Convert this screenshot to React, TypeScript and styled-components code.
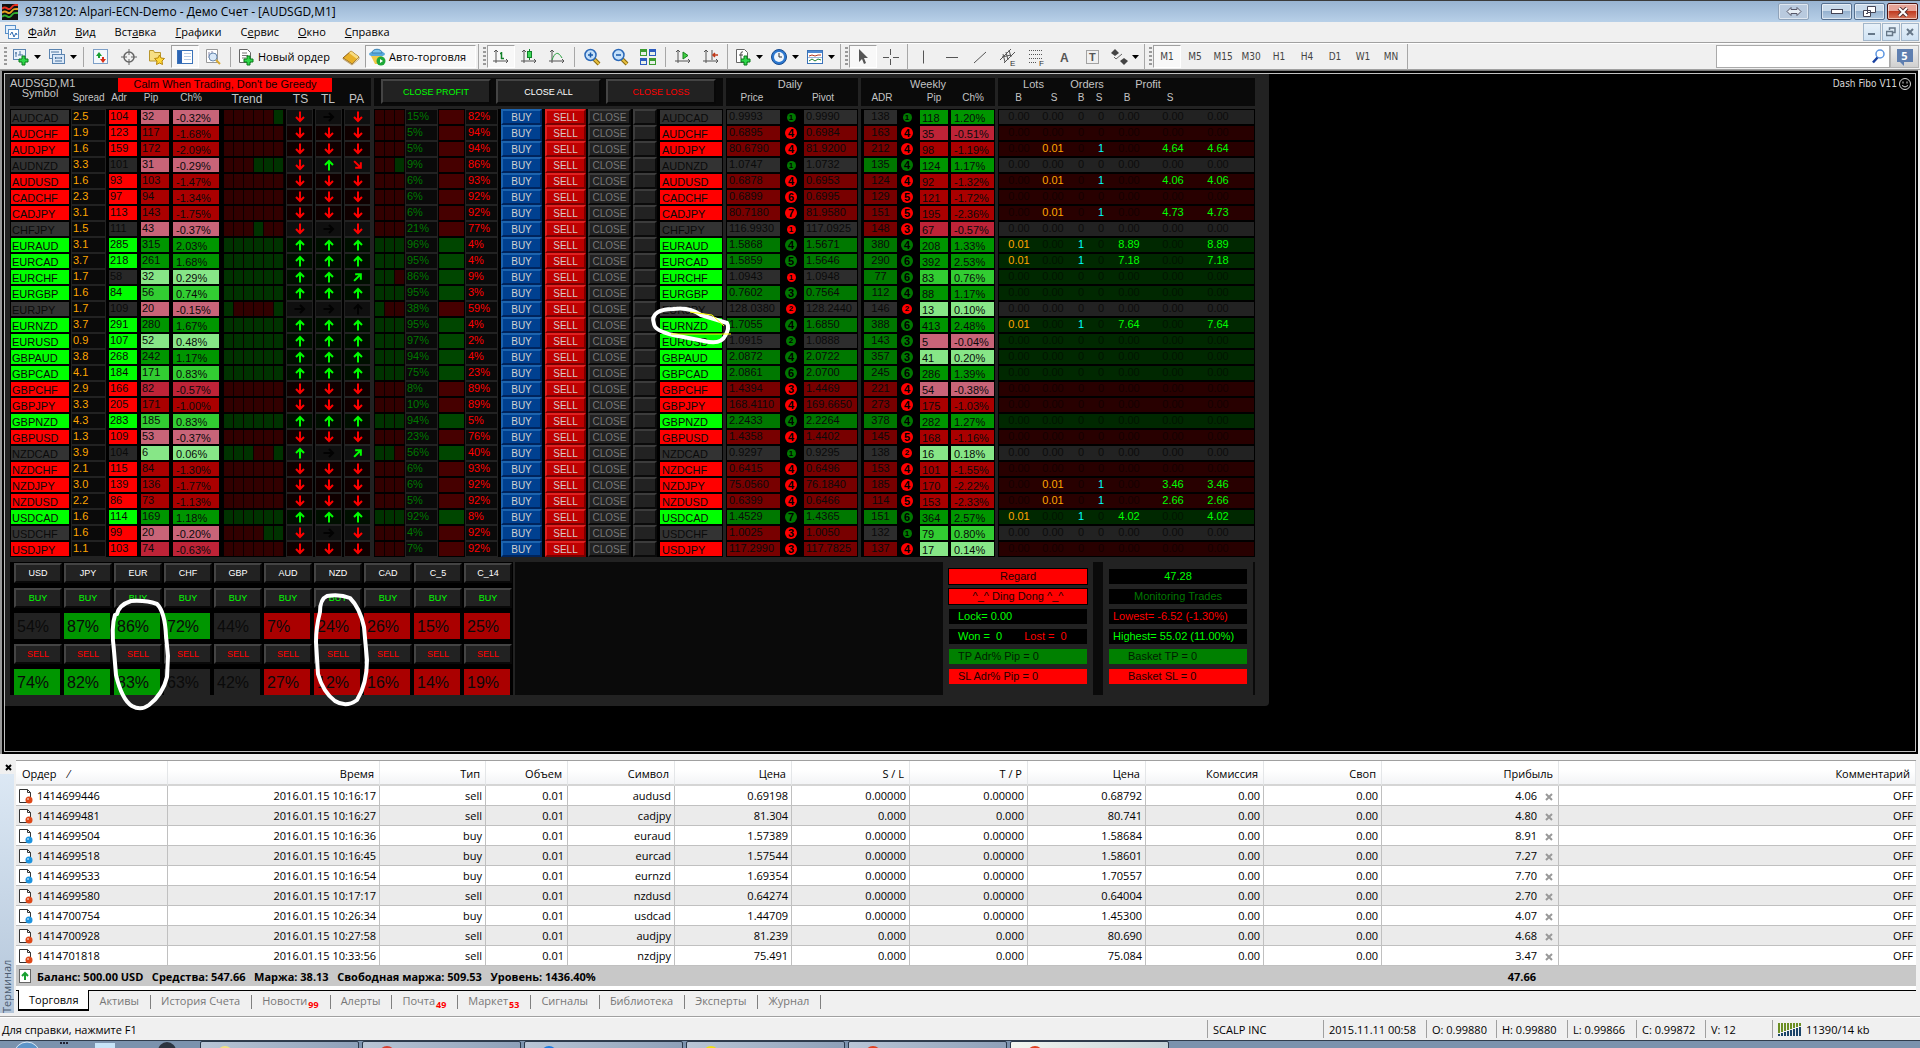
import React from "react";
import styled, { createGlobalStyle } from "styled-components";

const UI = `"Open Sans", "Noto Sans", sans-serif`;
const DASH = `"Liberation Sans", Arial, sans-serif`;

const Global = createGlobalStyle`
  * { box-sizing: border-box; }
  body { margin: 0; background: #f0f0f0; font-family: ${UI}; font-size: 11px; color: #000; }
  button { font: inherit; color: inherit; padding: 0; margin: 0; border: 0; background: none; cursor: pointer; }
  table { border-collapse: collapse; border-spacing: 0; }
  th, td { padding: 0; font-weight: normal; text-align: left; }
  svg { display: block; flex: none; }
`;

const Shell = styled.div`
  display: flex;
  flex-direction: column;
  height: 100vh;
  min-width: 1500px;
  overflow: hidden;
`;

/* ---------- title bar ---------- */
const TitleBar = styled.header`
  display: flex;
  align-items: center;
  height: 22px;
  flex: none;
  padding: 0 2px;
  gap: 7px;
  border-top: 1px solid #3b3b3b;
  background: linear-gradient(#98b4d2, #b8d0e8);
`;
const Title = styled.h1`
  flex: 1;
  margin: 0;
  font-size: 12px;
  font-weight: normal;
`;
const WinButtons = styled.div`
  display: flex;
  gap: 2px;
`;
const WinButton = styled.button<{ $kind?: "close" | "ghost" }>`
  display: flex;
  align-items: center;
  justify-content: center;
  width: 31px;
  height: 17px;
  border: 1px solid ${(p) => (p.$kind === "close" ? "#4a1410" : p.$kind === "ghost" ? "#8fa3ba" : "#55708f")};
  border-radius: 2px;
  margin-right: ${(p) => (p.$kind === "ghost" ? "10px" : "0")};
  box-shadow: inset 0 0 0 1px rgba(255, 255, 255, 0.55);
  background: ${(p) =>
    p.$kind === "close"
      ? "linear-gradient(#e6a498 0 45%, #c03c22 50%, #d9775c)"
      : p.$kind === "ghost"
      ? "#b9cade"
      : "linear-gradient(#c9daea 0 45%, #96b2cf 50%, #b4cbe2)"};
`;

/* ---------- menu bar ---------- */
const MenuBar = styled.nav`
  display: flex;
  align-items: center;
  height: 21px;
  flex: none;
  padding: 0 1px 0 4px;
  border-bottom: 1px solid #a0a0a0;
`;
const MenuList = styled.div`
  display: flex;
  flex: 1;
  gap: 19px;
  margin-left: 8px;
`;
const MenuItem = styled.button`
  font-size: 11px;
  line-height: 18px;
`;
const MdiButton = styled.button`
  display: flex;
  align-items: center;
  justify-content: center;
  width: 18px;
  height: 18px;
  margin-left: 1px;
  border: 1px solid #a3b6c9;
  background: linear-gradient(#e8f1f9, #cfe2f3);
`;

/* ---------- tool bar ---------- */
const ToolBar = styled.div`
  display: flex;
  align-items: center;
  height: 27px;
  flex: none;
  padding-left: 2px;
  border-top: 1px solid #fff;
  border-bottom: 1px solid #a0a0a0;
  background: #f0f0f0;
`;
const Grip = styled.div`
  width: 6px;
  height: 20px;
  background: repeating-linear-gradient(#9a9a9a 0 2px, #f0f0f0 2px 4px) center / 3px 100% no-repeat;
`;
const Sep = styled.div<{ $wide?: boolean }>`
  width: ${(p) => (p.$wide ? 7 : 5)}px;
  height: ${(p) => (p.$wide ? 20 : 26)}px;
  background: linear-gradient(#a7a7a7, #a7a7a7) center / 1px 100% no-repeat;
`;
const Tool = styled.button<{ $pressed?: boolean; $drop?: boolean }>`
  display: flex;
  align-items: center;
  justify-content: ${(p) => (p.$drop ? "flex-start" : "center")};
  gap: 4px;
  width: ${(p) => (p.$drop ? 36 : 28)}px;
  padding-left: ${(p) => (p.$drop ? 3 : 0)}px;
  height: 23px;
  flex: none;
  border: 1px solid transparent;
  ${(p) => p.$pressed && "border-color: #a0a0a0 #fff #fff #a0a0a0; background: #f8f8f8;"}
`;
const WideTool = styled(Tool)<{ $w: number }>`
  width: ${(p) => p.$w}px;
  gap: 3px;
  justify-content: flex-start;
  padding-left: 2px;
  font-size: 11px;
  white-space: nowrap;
`;
const Period = styled(Tool)`
  font-family: "DejaVu Sans Condensed", "DejaVu Sans", sans-serif;
  font-size: 10px;
  color: #444;
`;
const Spacer = styled.div`
  flex: 1;
`;
const SearchBox = styled.label`
  display: flex;
  align-items: center;
  width: 174px;
  height: 23px;
  padding-right: 4px;
  border: 1px solid #aaa;
  background: #fff;
`;
const SearchInput = styled.input`
  flex: 1;
  min-width: 0;
  border: 0;
  outline: 0;
  background: none;
`;
const Bubble = styled.button`
  display: flex;
  align-items: center;
  justify-content: center;
  width: 29px;
  height: 23px;
  border: 1px solid #b4b4b4;
  background: linear-gradient(#f0f0f0, #d0d0d0);
  margin-right: 1px;
`;
const BubbleMark = styled.span`
  position: relative;
  width: 16px;
  height: 13px;
  margin-bottom: 2px;
  background: #5f7fb0;
  color: #fff;
  font-weight: bold;
  font-size: 11px;
  line-height: 13px;
  &::after {
    content: "";
    position: absolute;
    left: 3px;
    top: 13px;
    border: solid transparent;
    border-width: 0 0 4px 4px;
    border-top: 4px solid #5f7fb0;
  }
`;

/* ---------- chart window ---------- */
const ChartFrame = styled.main`
  flex: 1;
  min-height: 0;
  margin-right: 2px;
  padding: 2px;
  border-top: 1px solid #777;
  border-left: 2px solid #999;
  background: #000;
`;
const Chart = styled.div`
  display: flex;
  justify-content: space-between;
  align-items: flex-start;
  height: 100%;
  border: 1px solid #c0c0c0;
  background: #000;
  font-family: ${DASH};
  overflow: hidden;
`;
const ExpertName = styled.div`
  display: flex;
  align-items: center;
  gap: 2px;
  padding: 3px 4px;
  color: #d8d8d8;
  font-size: 10px;
  line-height: 13px;
  font-family: "DejaVu Sans Condensed", "DejaVu Sans", sans-serif;
`;
const Panel = styled.section`
  position: relative;
  padding: 4px 14px 11px 5px;
  border-radius: 0 0 4px 0;
  background: #222;
`;
const Blocks = styled.div`
  display: flex;
  gap: 3px;
`;
const Grid = styled.table`
  display: block;
  font-size: 11px;
  line-height: 14px;
`;
const GridHead = styled.thead`
  display: block;
  height: 28px;
  margin-bottom: 3px;
  background: #0a0a0a;
  color: #c4c4c4;
`;
const HeadRow = styled.tr<{ $cols: string }>`
  display: grid;
  grid-template-columns: ${(p) => p.$cols};
  grid-template-rows: 14px 14px;
`;
const Th = styled.th<{ $span?: number; $big?: boolean; $group?: boolean; $pr?: number }>`
  grid-column: span ${(p) => p.$span || 1};
  padding-right: ${(p) => p.$pr || 0}px;
  text-align: center;
  font-size: ${(p) => (p.$big ? 12 : p.$group ? 11 : 10)}px;
  line-height: ${(p) => (p.$big ? 14 : 12)}px;
`;
const CornerTh = styled.th`
  grid-row: span 2;
  font-size: 11px;
  line-height: 10px;
  text-align: center;
  white-space: nowrap;
`;
const BannerTh = styled.th`
  grid-column: 3 / span 6;
  margin: 0 10px 0 11px;
  background: #f00;
  color: #100;
  font-size: 11px;
  line-height: 13px;
  text-align: center;
  white-space: nowrap;
`;
const LabelTh = styled(Th)<{ $col: number }>`
  grid-column: ${(p) => p.$col};
  grid-row: 2;
`;
const ActionRow = styled.tr`
  display: block;
`;
const HeadActions = styled.th`
  display: flex;
  justify-content: center;
  gap: 5px;
  padding-top: 1px;
`;
const GridBody = styled.tbody`
  display: block;
  background: #000;
`;
const Row = styled.tr`
  display: flex;
  height: 16px;
`;
const Cell = styled.td<{ $w: number; $ml?: number; $bg?: string; $fg?: string; $pl?: number; $frame?: boolean; $c?: boolean }>`
  width: ${(p) => p.$w}px;
  margin-left: ${(p) => p.$ml || 0}px;
  padding-left: ${(p) => p.$pl || 0}px;
  height: 16px;
  flex: none;
  border: 1px solid ${(p) => (p.$frame ? "#222" : "#000")};
  background: ${(p) => p.$bg || "#0a0a0a"};
  color: ${(p) => p.$fg || "#0a0a0a"};
  text-align: ${(p) => (p.$c ? "center" : "left")};
  line-height: 13px;
  white-space: nowrap;
`;
const SymCell = styled(Cell)`
  line-height: 16px;
`;
const BadgeCell = styled.td<{ $w: number }>`
  display: flex;
  align-items: center;
  justify-content: center;
  width: ${(p) => p.$w}px;
  height: 16px;
`;
const Badge = styled.span<{ $d: number; $bg: string }>`
  width: ${(p) => p.$d}px;
  height: ${(p) => p.$d}px;
  border-radius: 50%;
  background: ${(p) => p.$bg};
  color: #000;
  font-size: ${(p) => (p.$d > 10 ? 11 : 8)}px;
  line-height: ${(p) => p.$d}px;
  font-weight: bold;
  text-align: center;
`;
const TrendCell = styled(Cell)`
  display: flex;
`;
const TrendBox = styled.span<{ $up: boolean }>`
  width: 10px;
  height: 14px;
  flex: none;
  border-right: 1px solid #0c0000;
  background: ${(p) => (p.$up ? "#003200" : "#320000")};
`;
const ArrowCell = styled(Cell)`
  display: flex;
  align-items: center;
  justify-content: center;
`;
const ButtonCell = styled.td<{ $w: number; $ml: number }>`
  width: ${(p) => p.$w}px;
  margin-left: ${(p) => p.$ml}px;
  height: 16px;
`;
const tones = {
  buy: ["#004090", "#1c63ae", "#00245c", "#d0d0d0"],
  sell: ["#be0000", "#e02020", "#780000", "#d8c8c8"],
  close: ["#222", "#3c3c3c", "#0a0a0a", "#787878"],
  plain: ["#222", "#444", "#080808", "#fff"],
};
const Bevel = styled.button<{ $tone: keyof typeof tones; $h: number; $w?: number; $fg?: string }>`
  display: block;
  width: ${(p) => (p.$w ? p.$w + "px" : "100%")};
  height: ${(p) => p.$h}px;
  border-style: solid;
  border-width: 2px;
  border-color: ${(p) => `${tones[p.$tone][1]} ${tones[p.$tone][2]} ${tones[p.$tone][2]} ${tones[p.$tone][1]}`};
  background: ${(p) => tones[p.$tone][0]};
  color: ${(p) => p.$fg || tones[p.$tone][3]};
  font-size: ${(p) => (p.$h > 16 ? 9 : 10)}px;
  line-height: ${(p) => p.$h - 3}px;
  text-align: center;
`;
const OrdersRow = styled.tr<{ $bg: string }>`
  display: grid;
  grid-template-columns: 36px 32px 24px 16px 40px 48px 42px;
  width: 257px;
  height: 16px;
  padding: 0 2px;
  border: 1px solid #000;
  background: ${(p) => p.$bg};
`;
const OrderCell = styled.td<{ $fg: string }>`
  color: ${(p) => p.$fg};
  text-align: center;
  line-height: 13px;
`;

/* ---------- lower dashboard ---------- */
const Lower = styled.div`
  display: flex;
  height: 133px;
  margin-top: 5px;
`;
const Currencies = styled.div`
  display: flex;
  gap: 2px;
  width: 503px;
  margin-right: 2px;
  padding: 1px 0 0 4px;
  background: #000;
`;
const Currency = styled.div`
  display: flex;
  flex-direction: column;
  gap: 5px;
  width: 48px;
`;
const Strength = styled.div<{ $bg: string }>`
  width: 46px;
  height: 26px;
  padding-left: 3px;
  background: ${(p) => p.$bg};
  color: #0a0a0a;
  font-size: 16px;
  line-height: 28px;
`;
const Log = styled.div`
  flex: 1;
  background: #0a0a0a;
`;
const Stats = styled.div`
  display: flex;
  flex-direction: column;
  gap: 5px;
  width: 150px;
  padding: 7px 6px 0;
`;
const Stat = styled.div<{ $bg?: string; $fg: string; $pl?: number; $ring?: boolean }>`
  height: 15px;
  padding-left: ${(p) => p.$pl || 0}px;
  background: ${(p) => p.$bg || "#000"};
  box-shadow: ${(p) => (p.$ring ? "0 0 0 1px #000" : "none")};
  color: ${(p) => p.$fg};
  font-size: 11px;
  line-height: 15px;
  text-align: ${(p) => (p.$pl ? "left" : "center")};
  white-space: pre;
`;
const Lost = styled.span`
  margin-left: 22px;
  color: #f00;
`;
const Strip = styled.div<{ $w: number }>`
  width: ${(p) => p.$w}px;
  background: #0a0a0a;
`;
const Marks = styled.svg`
  position: absolute;
  left: 0;
  top: 0;
  pointer-events: none;
  overflow: visible;
`;

/* ---------- terminal ---------- */
const Terminal = styled.section`
  display: flex;
  flex: none;
  margin-top: 6px;
  padding-right: 4px;
  border-bottom: 1px solid #a0a0a0;
`;
const Side = styled.div`
  display: flex;
  flex-direction: column;
  align-items: center;
  width: 16px;
`;
const SideClose = styled.button`
  display: flex;
  align-items: center;
  height: 14px;
`;
const SideTitle = styled.div`
  flex: 1;
  width: 14px;
  margin: 0 2px 3px 0;
  background: linear-gradient(#b4c6da, #dce8f4);
  color: #4c5c70;
  writing-mode: vertical-rl;
  transform: rotate(180deg);
  font-size: 11px;
  line-height: 14px;
`;
const TerminalMain = styled.div`
  flex: 1;
  min-width: 0;
`;
const Orders = styled.table`
  width: 100%;
  table-layout: fixed;
  border-collapse: separate;
  border-top: 1px solid #a0a0a0;
  background: #fff;
`;
const OTh = styled.th<{ $left?: boolean }>`
  height: 25px;
  padding: 1px 5px 0 6px;
  border-right: 1px solid #e4e6e8;
  border-bottom: 2px solid #d5d5d5;
  background: linear-gradient(#fff 40%, #f3f4f6);
  text-align: ${(p) => (p.$left ? "left" : "right")};
`;
const OTr = styled.tr`
  &:nth-child(even) { background: #ebebeb; }
`;
const OTd = styled.td`
  height: 20px;
  padding: 0 3px;
  border-right: 1px solid #c0c0c0;
  border-bottom: 1px solid #c0c0c0;
  line-height: 18px;
  text-align: right;
  white-space: nowrap;
  &:last-child { border-right: 0; }
`;
const OrderId = styled.span`
  display: flex;
  align-items: center;
  gap: 4px;
`;
const CloseMark = styled.button`
  margin: 0 2px 0 8px;
  vertical-align: middle;
`;
const BalanceTd = styled.td<{ $sum?: boolean }>`
  height: 20px;
  padding: 0 ${(p) => (p.$sum ? 23 : 3)}px 0 3px;
  background: #c8c8c8;
  font-weight: bold;
  text-align: ${(p) => (p.$sum ? "right" : "left")};
  white-space: pre;
`;
const Tabs = styled.nav`
  display: flex;
  height: 30px;
  padding: 0 0 4px 2px;
  border-top: 4px solid #fff;
  background: linear-gradient(#000, #000) top / 100% 1px no-repeat;
`;
const Tab = styled.button<{ $active?: boolean }>`
  display: flex;
  align-items: center;
  height: 21px;
  padding: 0 ${(p) => (p.$active ? 10 : 11)}px 0 10px;
  color: ${(p) => (p.$active ? "#000" : "#777")};
  ${(p) => p.$active && "background: #fff; border: solid #000; border-width: 0 1px 2px 1px;"}
`;
const TabLine = styled.i`
  width: 1px;
  height: 14px;
  margin-top: 5px;
  background: #808080;
`;
const Count = styled.sub`
  margin-left: 1px;
  padding-top: 8px;
  color: #f00;
  font-size: 9px;
  line-height: 10px;
  font-weight: bold;
`;

/* ---------- status and task bar ---------- */
const StatusBar = styled.footer`
  display: flex;
  align-items: center;
  height: 23px;
  flex: none;
  padding-left: 2px;
  border-top: 1px solid #fff;
`;
const StatusHint = styled.span`
  flex: 1;
`;
const StatusItem = styled.span<{ $w: number }>`
  display: flex;
  align-items: center;
  gap: 4px;
  width: ${(p) => p.$w}px;
  height: 18px;
  padding-left: 5px;
  border-left: 1px solid #a0a0a0;
`;
const TaskBar = styled.div`
  display: flex;
  gap: 3px;
  height: 8px;
  flex: none;
  border-top: 1px solid #303c4c;
  background: #7b92ad;
  overflow: hidden;
`;
const TaskStart = styled.div`
  width: 197px;
`;
const TaskButton = styled.button<{ $active?: boolean }>`
  width: 159px;
  height: 24px;
  padding-left: 14px;
  border: 1px solid #2b3a4c;
  border-radius: 2px;
  background: ${(p) => (p.$active ? "linear-gradient(90deg, #f2f6f0, #c5d2d8)" : "linear-gradient(90deg, #b9c6d6, #8da0b8)")};
`;

/* ---------- icons ---------- */
const G = "#555";
const axes = <path d="M4 2v13M1 13h15M2 4l2-2 2 2M14 11l2 2-2 2" stroke={G} fill="none" />;
const plus = <path d="M10 8h3v3h3v3h-3v3h-3v-3H7v-3h3z" fill="#2fd84a" stroke="#0b7a1b" />;
const lens = (
  <>
    <path d="M11 11l5 5" stroke="#8a6a10" strokeWidth="4" />
    <path d="M11 11l5 5" stroke="#e8c040" strokeWidth="2" />
    <circle cx="7.5" cy="7" r="5.5" fill="#c4e0fa" stroke="#2a68b8" strokeWidth="1.5" />
  </>
);
const page = <path d="M2.5 1.5h8l3 3v10h-11z" fill="#fff" stroke="#666" />;
const icons: Record<string, React.ReactNode> = {
  newChart: <><rect x="1.5" y="1.5" width="12" height="10" fill="#eaf2fb" stroke="#5b84b0" /><path d="M4 4v5M3 5h2M8 3v4M6 7h5" stroke="#4a74a0" />{plus}</>,
  profiles: <><rect x="1.5" y="1.5" width="12" height="9" fill="#e6effa" stroke="#5b84b0" /><rect x="4.5" y="6.5" width="12" height="9" fill="#dbe8f8" stroke="#5b84b0" /><path d="M3 4h8M7 10h7M7 13h7M8 9l-1 1 1 1M13 9l1 1-1 1" stroke="#4a74a0" fill="none" /></>,
  market: <><rect x="1.5" y="1.5" width="14" height="14" fill="#f4f8fc" stroke="#7ea0c8" /><path d="M4 8l3-4 3 4H8v2H6V8z" fill="#18a030" /><path d="M8 11l3 4 3-4h-2V9h-2v2z" fill="#d83018" /></>,
  data: <><circle cx="9" cy="9" r="5" fill="none" stroke="#666" strokeWidth="1.5" /><path d="M9 1v6M9 11v6M1 9h6M11 9h6" stroke="#666" /></>,
  folder: <><path d="M1.5 13V2.500h4l1 2h6V13z" fill="#f6df84" stroke="#b8962c" /><path d="M11.5 7l1.5 3 3.5.5-2.5 2.5.5 3.500-3-1.500-3 1.500.5-3.500-2.500-2.500 3.500-.5z" fill="#ffd93a" stroke="#b8860b" /></>,
  navigator: <><rect x="1.5" y="2.5" width="15" height="13" fill="#fff" stroke="#3a72b8" /><rect x="2" y="3" width="4" height="12" fill="#2c64b4" /><path d="M8 5.500h7M8 8.500h7M8 11.500h7" stroke="#b8cce4" /></>,
  tester: <><path d="M2.5 1.500h11v13h-11z" fill="#fff" stroke="#999" /><path d="M5 4v6M8 3v6M11 5v4" stroke="#88a" /><circle cx="9" cy="9" r="4" fill="#d8e8f8" stroke="#6a8ab0" /><path d="M12 12l4 4" stroke="#d8a830" strokeWidth="2" /></>,
  order: <>{page}<path d="M5 5h5M5 7.500h6M5 10h4" stroke="#777" />{plus}</>,
  book: <><path d="M1 10L9 3l8 6-7 7z" fill="#e8b028" stroke="#8c5c10" /><path d="M9 3l8 6-2 2-8-6z" fill="#f8dc80" /><path d="M1 10l9 6 7-7v2l-7 6-9-6z" fill="#fff3c8" stroke="#8c5c10" strokeWidth=".5" /></>,
  auto: <><ellipse cx="9" cy="6" rx="8" ry="3" fill="#58a8dc" /><path d="M4 5c0-5 10-5 10 0z" fill="#7cc4ee" stroke="#3a80b0" /><path d="M3 8h11l-4 8H7z" fill="#f0c848" /><circle cx="13" cy="13" r="4.5" fill="#1fa838" /><path d="M12 11v4l3-2z" fill="#fff" /></>,
  bars: <>{axes}<path d="M9.500 4v7M8 5.500h2M9 10.500h3" stroke="#12802a" fill="none" strokeWidth="1.5" /></>,
  candles: <>{axes}<path d="M9.500 1v11" stroke="#12802a" /><rect x="7.5" y="3.5" width="4" height="6" fill="#3cd858" stroke="#12802a" /></>,
  line: <>{axes}<path d="M4 12c3-8 6-9 10-2" stroke="#2aa040" fill="none" /></>,
  zoomIn: <>{lens}<path d="M5 7h5M7.500 4.500v5" stroke="#1858a8" strokeWidth="1.5" /></>,
  zoomOut: <>{lens}<path d="M5 7h5" stroke="#1858a8" strokeWidth="1.5" /></>,
  tile: <><path d="M1 1h7v7H1z" fill="#3c9c30" /><path d="M10 1h7v7h-7z" fill="#2c5cc0" /><path d="M1 10h7v7H1z" fill="#2c5cc0" /><path d="M10 10h7v7h-7z" fill="#3c9c30" /><path d="M2 4h5v3H2zM11 4h5v3h-5zM2 13h5v3H2zM11 13h5v3h-5z" fill="#e8f0e8" /></>,
  scroll: <>{axes}<path d="M9 4v7l5-3.500z" fill="#3cd040" stroke="#188020" /></>,
  shift: <>{axes}<path d="M10 2v10" stroke={G} /><path d="M16 7h-5M13 5l-2 2 2 2" stroke="#c03818" strokeWidth="1.5" fill="none" /></>,
  indicators: <>{page}<path d="M9 4c-3-1-2 3-2 7M5 7h4" stroke="#444" fill="none" />{plus}</>,
  clock: <><circle cx="9" cy="9" r="7.5" fill="#2c78d0" stroke="#184c90" /><circle cx="9" cy="9" r="5" fill="#eef5fc" /><path d="M9 5v4h3" stroke="#333" fill="none" /></>,
  template: <><rect x="1.5" y="2.5" width="15" height="13" fill="#fff" stroke="#3a72b8" /><path d="M2 3h14v2H2z" fill="#4c88d0" /><path d="M3 8l3-1 3 1 3-1 3 0" stroke="#b03820" fill="none" /><path d="M3 13l3-2 3 2 3-2 3 1" stroke="#208030" fill="none" /><path d="M2 9.500h14" stroke="#9ab8dc" /></>,
  cursor: <path d="M5 1v13l3-3 2 5 2-1-2-5h4z" fill="#555" />,
  cross: <path d="M8.500 1v6M8.500 11v6M1 9.500h6M11 9.500h6" stroke={G} />,
  vline: <path d="M8.500 2.500v13" stroke={G} />,
  hline: <path d="M3 9.500h12" stroke={G} />,
  diag: <path d="M3 15L15 4" stroke={G} />,
  channel: <><path d="M1 12L12 1M5 15L16 4M4 6l2 8M7 4l2 8M10 2l2 7M3 9l9-2" stroke={G} fill="none" /><text x="11" y="18" fontSize="8" fill="#333" fontFamily="Liberation Sans">E</text></>,
  fibo: <><path d="M2 2.500h14M2 6.500h14M2 10.500h14M2 14.500h8" stroke={G} strokeDasharray="1 1" /><text x="12" y="18" fontSize="8" fill="#333" fontFamily="Liberation Sans">F</text></>,
  text: <text x="5" y="14" fontSize="12" fontWeight="bold" fill="#555" fontFamily="Liberation Sans">A</text>,
  label: <><rect x="3.5" y="2.5" width="12" height="13" fill="none" stroke={G} strokeDasharray="1 1" /><text x="6" y="13" fontSize="11" fontWeight="bold" fill="#555" fontFamily="Liberation Sans">T</text></>,
  arrows: <><path d="M1 5l4-4 4 4-4 3z" fill="#444" /><path d="M4 9l2 2 6-5" stroke="#666" fill="none" /><path d="M10 13l4 4 4-4-4-3z" fill="#444" /></>,
};
const Icon = ({ name }: { name: string }) => (
  <svg width="18" height="18" viewBox="0 0 18 18" overflow="visible" aria-hidden="true">{icons[name]}</svg>
);
const Caret = () => (
  <svg width="7" height="4" aria-hidden="true"><path d="M0 0h7L3.500 4z" fill="#000" /></svg>
);
const arrowTurn: Record<string, [number, string]> = {
  d: [180, "#f00"], u: [0, "#0f0"], s: [135, "#f00"], n: [45, "#0f0"], "-": [90, "#020202"], "^": [0, "#020202"],
};
const Arrow = ({ kind }: { kind: string }) => (
  <svg width="12" height="12" viewBox="0 0 12 12" aria-hidden="true">
    <path d="M6 11.500V2M2 6l4-4 4 4" fill="none" stroke={arrowTurn[kind][1]} strokeWidth="2" transform={`rotate(${arrowTurn[kind][0]} 6 6)`} />
  </svg>
);
const DocIcon = ({ buy }: { buy: boolean }) => (
  <svg width="14" height="16" viewBox="0 0 14 16" aria-hidden="true">
    <path d="M.5 1.500h8l3 3v10H.5z" fill="#fff" stroke="#333" />
    <path d="M8.500 1.500v3h3" fill="none" stroke="#333" />
    <circle cx="10" cy="12" r="3.5" fill={buy ? "#1c94e0" : "#e04818"} />
    <circle cx="9" cy="11" r="1" fill="#fff" opacity=".6" />
  </svg>
);

/* ---------- data ---------- */
const tone: Record<string, string> = { P: "#c86478", C: "#be2337", R: "#aa0000", L: "#87e687", M: "#32cd32", G: "#009600" };
const symBg: Record<string, string> = { d: "#f00", u: "#0f0", n: "#333" };
const adrBg: Record<string, string> = { d: "#f00", u: "#0f0", n: "#282828" };
const dimBg: Record<string, string> = { d: "#780000", u: "#007800", n: "#2d2d2d" };
const ordBg: Record<string, string> = { d: "#280000", u: "#002800", n: "#222" };
const arrBg: Record<string, string> = { d: "#0f0000", u: "#000f00", n: "#0f0f0f" };

// symbol state spread | adr state | pip change tone | trend arrows mini | buy bar sell | price state badge pivot | adr state badge | pip change tone | order
const pairs = `
AUDCAD n 2.5 104 d 32 -0.32% P rrrrrg d-d rrr 15% r 82% 0.9993 n 1g 0.9990 138 n 1g 118 1.20% G
AUDCHF d 1.9 123 d 117 -1.68% R rrrrrr ddd rrr 5% r 94% 0.6895 d 4r 0.6984 163 d 4r 35 -0.51% C
AUDJPY d 1.6 159 d 172 -2.09% R rrrrrr ddd rrr 5% r 94% 80.6790 d 4r 81.9200 212 d 4r 98 -1.19% R S4.64
AUDNZD n 3.3 101 n 31 -0.29% P rrrggg dus rrg 9% r 86% 1.0747 n 1g 1.0732 135 u 4g 124 1.17% G
AUDUSD d 1.6 93 d 103 -1.47% R rrrrrr ddd rrr 6% r 93% 0.6878 d 4r 0.6953 124 d 4r 92 -1.32% R S4.06
CADCHF d 2.3 97 d 94 -1.34% R rrrrrr ddd rrr 6% r 92% 0.6899 d 6r 0.6995 129 d 5r 121 -1.72% R
CADJPY d 3.1 113 d 143 -1.75% R rrrrrr ddd rrr 6% r 92% 80.7180 d 7r 81.9580 151 d 5r 195 -2.36% R S4.73
CHFJPY n 1.5 111 n 43 -0.37% P rrrgrr d-d rrr 21% r 77% 116.9930 n 1r 117.0925 148 d 3r 67 -0.57% C
EURAUD u 3.1 285 u 315 2.03% G gggggg uuu ggg 96% g 4% 1.5868 u 4g 1.5671 380 u 4g 208 1.33% G B8.89
EURCAD u 3.7 218 u 261 1.68% G gggggg uuu ggg 95% g 4% 1.5859 u 5g 1.5646 290 u 6g 392 2.53% G B7.18
EURCHF u 1.7 58 n 32 0.29% L gggggg uun ggr 86% g 9% 1.0943 n 1r 1.0948 77 u 6g 83 0.76% M
EURGBP u 1.6 84 u 56 0.74% M gggggg uuu ggg 95% g 3% 0.7602 u 3g 0.7564 112 u 4g 88 1.17% G
EURJPY n 1.7 109 n 20 -0.15% P grrrrg --^ grr 38% r 59% 128.0380 n 2r 128.2440 146 n 2r 13 0.10% L
EURNZD u 3.7 291 u 280 1.67% G gggggg uuu ggg 95% g 4% 1.7055 u 4g 1.6850 388 u 6g 413 2.48% G B7.64
EURUSD u 0.9 107 u 52 0.48% L gggggg uuu ggg 97% g 2% 1.0915 n 2g 1.0888 143 u 3g 5 -0.04% P
GBPAUD u 3.8 268 u 242 1.17% G gggggg uuu ggg 94% g 4% 2.0872 u 4g 2.0722 357 u 3g 41 0.20% L
GBPCAD u 4.1 184 u 171 0.83% M gggggg uuu ggg 75% g 23% 2.0861 u 6g 2.0700 245 u 6g 286 1.39% G
GBPCHF d 2.9 166 d 82 -0.57% C rrrrrr ddd rrr 8% r 89% 1.4394 d 3r 1.4469 221 d 4r 54 -0.38% P
GBPJPY d 3.3 205 d 171 -1.00% R rrrrrr ddd rrr 10% r 89% 168.4110 d 4r 169.6650 273 d 4r 175 -1.03% R
GBPNZD u 4.3 283 u 185 0.83% M gggggg uuu ggg 94% g 5% 2.2433 u 4g 2.2264 378 u 4g 282 1.27% G
GBPUSD d 1.3 109 d 53 -0.37% P rrrrrr ddd rrr 23% r 76% 1.4358 d 4r 1.4402 145 d 5r 168 -1.16% R
NZDCAD n 3.9 104 n 6 0.06% L gggrrg u-n ggr 56% g 40% 0.9297 n 1g 0.9295 138 n 2r 16 0.18% L
NZDCHF d 2.1 115 d 84 -1.30% R rrrrrr ddd rrr 6% r 93% 0.6415 d 4r 0.6496 153 d 4r 101 -1.55% R
NZDJPY d 3.0 139 d 136 -1.77% R rrrrrr ddd rrr 6% r 92% 75.0560 d 4r 76.1840 185 d 4r 170 -2.22% R S3.46
NZDUSD d 2.2 86 d 73 -1.13% R rrrrrr ddd rrr 5% r 92% 0.6399 d 4r 0.6466 114 d 5r 153 -2.33% R S2.66
USDCAD u 1.6 114 u 169 1.18% G gggggg uuu ggg 92% g 8% 1.4529 u 7g 1.4365 151 u 6g 364 2.57% G B4.02
USDCHF n 1.6 99 d 20 -0.20% P rrrrgg d-d rrr 4% r 92% 1.0025 d 3r 1.0050 132 n 1g 79 0.80% M
USDJPY d 1.1 103 d 74 -0.63% C rrrrrr ddd rrr 7% r 92% 117.2990 d 3r 117.7825 137 d 4r 17 0.14% L`
  .trim()
  .split("\n")
  .map((l) => {
    const [sym, st, spread, adr, adrS, pip, ch, chT, trend, arrows, mini, buy, bar, sell, price, priceS, b1, pivot, wAdr, wAdrS, b2, wPip, wCh, wT, order] = l.split(" ");
    return { sym, st, spread, adr, adrS, pip, ch, chT, trend, arrows, mini, buy, bar, sell, price, priceS, b1, pivot, wAdr, wAdrS, b2, wPip, wCh, wT, order };
  });

const currencies: [string, string, string, string, string][] = [
  ["USD", "54%", "n", "74%", "u"], ["JPY", "87%", "u", "82%", "u"], ["EUR", "86%", "u", "83%", "u"],
  ["CHF", "72%", "u", "63%", "n"], ["GBP", "44%", "n", "42%", "n"], ["AUD", "7%", "d", "27%", "d"],
  ["NZD", "24%", "d", "12%", "d"], ["CAD", "26%", "d", "16%", "d"], ["C_5", "15%", "d", "14%", "d"],
  ["C_14", "25%", "d", "19%", "d"],
];
const strengthBg: Record<string, string> = { d: "#aa0000", u: "#009600", n: "#222" };

const orders = `
1414699446|10:16:17|sell|audusd|0.69198|0.00000|0.68792|4.06
1414699481|10:16:27|sell|cadjpy|81.304|0.000|80.741|4.80
1414699504|10:16:36|buy|euraud|1.57389|0.00000|1.58684|8.91
1414699518|10:16:45|buy|eurcad|1.57544|0.00000|1.58601|7.27
1414699533|10:16:54|buy|eurnzd|1.69354|0.00000|1.70557|7.70
1414699580|10:17:17|sell|nzdusd|0.64274|0.00000|0.64004|2.70
1414700754|10:26:34|buy|usdcad|1.44709|0.00000|1.45300|4.07
1414700928|10:27:58|sell|audjpy|81.239|0.000|80.690|4.68
1414701818|10:33:56|sell|nzdjpy|75.491|0.000|75.084|3.47`
  .trim()
  .split("\n")
  .map((l) => l.split("|"));
const orderCols = [152, 212, 106, 82, 107, 117, 118, 118, 118, 118, 118, 177];
const orderHeads = ["Время", "Тип", "Объем", "Символ", "Цена", "S / L", "T / P", "Цена", "Комиссия", "Своп", "Прибыль", "Комментарий"];

const menus = [["", "Ф", "айл"], ["", "В", "ид"], ["Вст", "а", "вка"], ["", "Г", "рафики"], ["С", "е", "рвис"], ["", "О", "кно"], ["", "С", "правка"]];
const tabs: [string, string?][] = [["Активы"], ["История Счета"], ["Новости", "99"], ["Алерты"], ["Почта", "49"], ["Маркет", "53"], ["Сигналы"], ["Библиотека"], ["Эксперты"], ["Журнал"]];

const NumBadge = ({ v }: { v: string }) => (
  <Badge $d={v[0] === "1" ? 9 : v[0] === "2" ? 10 : 12} $bg={v[1] === "g" ? "#007800" : "#f00"}>{v[0]}</Badge>
);

const SignalBlock = () => (
  <Grid>
    <GridHead>
      <HeadRow $cols="60px 37px 32px 32px 48px 68px 27px 28px 29px">
        <CornerTh>AUDSGD,M1<br />Symbol</CornerTh>
        <BannerTh>Calm When Trading, Don't be Greedy</BannerTh>
        <LabelTh $col={2}>Spread</LabelTh>
        <LabelTh $col={3} $pr={8}>Adr</LabelTh>
        <LabelTh $col={4} $pr={8}>Pip</LabelTh>
        <LabelTh $col={5} $pr={8}>Ch%</LabelTh>
        <LabelTh $col={6} $pr={12} $big>Trend</LabelTh>
        <LabelTh $col={7} $big>TS</LabelTh>
        <LabelTh $col={8} $big>TL</LabelTh>
        <LabelTh $col={9} $big>PA</LabelTh>
      </HeadRow>
    </GridHead>
    <GridBody>
      {pairs.map((p) => (
        <Row key={p.sym}>
          <SymCell $w={60} $bg={symBg[p.st]} $pl={1}>{p.sym}</SymCell>
          <Cell $w={35} $ml={1} $frame $fg="#ffa500" $pl={1}>{p.spread}</Cell>
          <Cell $w={30} $ml={2} $bg={adrBg[p.adrS]} $pl={1}>{p.adr}</Cell>
          <Cell $w={30} $ml={2} $bg={tone[p.chT]} $pl={1}>{p.pip}</Cell>
          <SymCell $w={48} $ml={2} $bg={tone[p.chT]} $pl={3}>{p.ch}</SymCell>
          <TrendCell $w={62} $ml={3}>{[...p.trend].map((t, i) => <TrendBox key={i} $up={t === "g"} />)}</TrendCell>
          {[...p.arrows].map((a, i) => (
            <ArrowCell key={i} $w={27} $ml={i ? 2 : 1} $frame $bg={arrBg[p.st]}><Arrow kind={a} /></ArrowCell>
          ))}
        </Row>
      ))}
    </GridBody>
  </Grid>
);

const TradeBlock = () => (
  <Grid>
    <GridHead>
      <ActionRow>
        <HeadActions>
          <Bevel $tone="plain" $h={25} $w={110} $fg="#0f0">CLOSE PROFIT</Bevel>
          <Bevel $tone="plain" $h={25} $w={105}>CLOSE ALL</Bevel>
          <Bevel $tone="plain" $h={25} $w={110} $fg="#f00">CLOSE LOSS</Bevel>
        </HeadActions>
      </ActionRow>
    </GridHead>
    <GridBody>
      {pairs.map((p) => (
        <Row key={p.sym}>
          <TrendCell $w={31}>{[...p.mini].map((t, i) => <TrendBox key={i} $up={t === "g"} />)}</TrendCell>
          <Cell $w={33} $frame $fg="#007800" $pl={1}>{p.buy}</Cell>
          <Cell $w={27} $bg={p.bar === "g" ? "#004600" : "#460000"} />
          <Cell $w={33} $frame $fg="#f00" $pl={2}>{p.sell}</Cell>
          <ButtonCell $w={41} $ml={3}><Bevel $tone="buy" $h={16}>BUY</Bevel></ButtonCell>
          <ButtonCell $w={41} $ml={3}><Bevel $tone="sell" $h={16}>SELL</Bevel></ButtonCell>
          <ButtonCell $w={43} $ml={2}><Bevel $tone="close" $h={16}>CLOSE</Bevel></ButtonCell>
          <ButtonCell $w={24} $ml={2}><Bevel $tone="close" $h={16} aria-label={"Lock " + p.sym} /></ButtonCell>
          <SymCell $w={64} $ml={2} $bg={symBg[p.st]} $pl={2}>{p.sym}</SymCell>
        </Row>
      ))}
    </GridBody>
  </Grid>
);

const DailyBlock = () => (
  <Grid>
    <GridHead>
      <HeadRow $cols="52px 22px 58px">
        <Th $span={3} $group $pr={4}>Daily</Th><Th>Price</Th><Th /><Th $pr={12}>Pivot</Th>
      </HeadRow>
    </GridHead>
    <GridBody>
      {pairs.map((p) => (
        <Row key={p.sym}>
          <Cell $w={55} $bg={dimBg[p.priceS]} $pl={2}>{p.price}</Cell>
          <BadgeCell $w={20}><NumBadge v={p.b1} /></BadgeCell>
          <Cell $w={55} $ml={2} $bg={dimBg[p.priceS]} $pl={2}>{p.pivot}</Cell>
        </Row>
      ))}
    </GridBody>
  </Grid>
);

const WeeklyBlock = () => (
  <Grid>
    <GridHead>
      <HeadRow $cols="42px 14px 34px 44px">
        <Th $span={4} $group>Weekly</Th><Th>ADR</Th><Th /><Th>Pip</Th><Th>Ch%</Th>
      </HeadRow>
    </GridHead>
    <GridBody>
      {pairs.map((p) => (
        <Row key={p.sym}>
          <Cell $w={35} $ml={2} $bg={dimBg[p.wAdrS]} $c>{p.wAdr}</Cell>
          <BadgeCell $w={18}><NumBadge v={p.b2} /></BadgeCell>
          <SymCell $w={30} $ml={3} $bg={tone[p.wT]} $pl={2}>{p.wPip}</SymCell>
          <SymCell $w={45} $ml={1} $bg={tone[p.wT]} $pl={3}>{p.wCh}</SymCell>
        </Row>
      ))}
    </GridBody>
  </Grid>
);

const OrdersBlock = () => (
  <Grid>
    <GridHead>
      <HeadRow $cols="41px 30px 24px 12px 44px 42px 64px">
        <Th $span={2} $group>Lots</Th><Th $span={2} $group>Orders</Th><Th $span={2} $group>Profit</Th><Th />
        <Th>B</Th><Th>S</Th><Th>B</Th><Th>S</Th><Th>B</Th><Th>S</Th>
      </HeadRow>
    </GridHead>
    <GridBody>
      {pairs.map((p) => {
        const b = p.order?.[0] === "B";
        const s = p.order?.[0] === "S";
        const profit = p.order?.slice(1) || "0.00";
        const off = p.st === "n" ? "#0c0c0c" : p.st === "u" ? "#001400" : "#140000";
        return (
          <OrdersRow key={p.sym} $bg={ordBg[p.st]}>
            <OrderCell $fg={b ? "#ffa500" : off}>{b ? "0.01" : "0.00"}</OrderCell>
            <OrderCell $fg={s ? "#ffa500" : off}>{s ? "0.01" : "0.00"}</OrderCell>
            <OrderCell $fg={b ? "#0ff" : off}>{b ? 1 : 0}</OrderCell>
            <OrderCell $fg={s ? "#0ff" : off}>{s ? 1 : 0}</OrderCell>
            <OrderCell $fg={b ? "#0f0" : off}>{b ? profit : "0.00"}</OrderCell>
            <OrderCell $fg={s ? "#0f0" : off}>{s ? profit : "0.00"}</OrderCell>
            <OrderCell $fg={b || s ? "#0f0" : off}>{profit}</OrderCell>
          </OrdersRow>
        );
      })}
    </GridBody>
  </Grid>
);

const T = ({ n, pressed, drop }: { n: string; pressed?: boolean; drop?: boolean }) => (
  <Tool $pressed={pressed} $drop={drop} aria-label={n}><Icon name={n} />{drop && <Caret />}</Tool>
);

export default function App() {
  return (
    <Shell>
      <Global />
      <TitleBar>
        <svg width="16" height="16" viewBox="0 0 16 16" aria-hidden="true">
          <rect width="16" height="16" fill="#111" />
          <path d="M0 5c4-5 6 3 9-1s4-3 7-3" stroke="#e83020" strokeWidth="2" fill="none" />
          <path d="M0 9c4-5 6 3 9-1s4-3 7-3" stroke="#e8a020" strokeWidth="2" fill="none" />
          <path d="M0 13c4-5 6 3 9-1s4-3 7-3" stroke="#30b030" strokeWidth="2" fill="none" />
        </svg>
        <Title>9738120: Alpari-ECN-Demo - Демо Счет - [AUDSGD,M1]</Title>
        <WinButtons>
          <WinButton $kind="ghost" aria-label="Переключить">
            <svg width="16" height="9"><path d="M1 4.500l4-4v2h6v-2l4 4-4 4v-2H5v2z" fill="#e8eef5" stroke="#556" /></svg>
          </WinButton>
          <WinButton aria-label="Свернуть"><svg width="12" height="5"><rect x=".5" y=".5" width="11" height="4" fill="#fff" stroke="#445" /></svg></WinButton>
          <WinButton aria-label="Восстановить"><svg width="13" height="11"><path d="M4.500.5h8v6h-8zM.5 4.500h7v6h-7z" fill="#fff" stroke="#445" /><path d="M3 7h2v1H3z" fill="#445" /></svg></WinButton>
          <WinButton $kind="close" aria-label="Закрыть"><svg width="12" height="10"><path d="M2 1l8 8M10 1L2 9" stroke="#533" strokeWidth="4" /><path d="M2 1l8 8M10 1L2 9" stroke="#fff" strokeWidth="2" /></svg></WinButton>
        </WinButtons>
      </TitleBar>

      <MenuBar>
        <svg width="16" height="16" viewBox="0 0 16 16" aria-hidden="true">
          <rect x="1.5" y="1.5" width="10" height="8" fill="#e4f0fc" stroke="#5a90c8" />
          <rect x="4.5" y="5.5" width="10" height="9" fill="#fff" stroke="#5a90c8" />
          <path d="M6 11l2-3 2 5 2-4 1 2" stroke="#2a68b0" fill="none" />
        </svg>
        <MenuList>
          {menus.map(([a, u, b]) => <MenuItem key={u + b}>{a}<u>{u}</u>{b}</MenuItem>)}
        </MenuList>
        <MdiButton aria-label="Свернуть окно"><svg width="8" height="8"><path d="M0 6h7" stroke="#678" strokeWidth="2" /></svg></MdiButton>
        <MdiButton aria-label="Восстановить окно"><svg width="10" height="10"><path d="M3.500 3V1H9v4.500H7M.5 4.500h6v4h-6z" stroke="#678" fill="none" strokeWidth="1.5" /></svg></MdiButton>
        <MdiButton aria-label="Закрыть окно"><svg width="8" height="8"><path d="M1 1l6 6M7 1L1 7" stroke="#678" strokeWidth="2" /></svg></MdiButton>
      </MenuBar>

      <ToolBar>
        <Grip />
        <T n="newChart" drop /><T n="profiles" drop /><Sep $wide />
        <T n="market" /><T n="data" /><T n="folder" /><T n="navigator" pressed /><T n="tester" /><Sep $wide />
        <WideTool $w={103}><Icon name="order" />Новый ордер</WideTool>
        <T n="book" />
        <WideTool $w={111} $pressed><Icon name="auto" />Авто-торговля</WideTool>
        <Sep /><Grip />
        <T n="bars" pressed /><T n="candles" /><T n="line" /><Sep $wide />
        <T n="zoomIn" /><T n="zoomOut" /><T n="tile" /><Sep $wide />
        <T n="scroll" /><T n="shift" /><Sep />
        <T n="indicators" drop /><T n="clock" drop /><T n="template" drop />
        <Sep /><Grip />
        <T n="cursor" pressed /><T n="cross" /><Sep />
        <T n="vline" /><T n="hline" /><T n="diag" /><T n="channel" /><T n="fibo" /><T n="text" /><T n="label" /><T n="arrows" drop />
        <Sep /><Grip />
        {["M1", "M5", "M15", "M30", "H1", "H4", "D1", "W1", "MN"].map((m, i) => <Period key={m} $pressed={i === 0}>{m}</Period>)}
        <Sep />
        <Spacer />
        <SearchBox>
          <SearchInput aria-label="Поиск" />
          <svg width="13" height="15" viewBox="0 0 13 15" aria-hidden="true">
            <circle cx="8" cy="5" r="4" fill="#fff" stroke="#5a94e0" strokeWidth="1.5" />
            <path d="M5.500 8.500L1 13.500" stroke="#1840a0" strokeWidth="2.5" />
          </svg>
        </SearchBox>
        <Bubble><BubbleMark>5</BubbleMark></Bubble>
      </ToolBar>

      <ChartFrame>
        <Chart>
          <Panel>
            <Blocks>
              <SignalBlock /><TradeBlock /><DailyBlock /><WeeklyBlock /><OrdersBlock />
            </Blocks>
            <Lower>
              <Currencies>
                {currencies.map(([name, b, bs, s, ss]) => (
                  <Currency key={name}>
                    <Bevel $tone="plain" $h={20}>{name}</Bevel>
                    <Bevel $tone="plain" $h={20} $fg="#0f0">BUY</Bevel>
                    <Strength $bg={strengthBg[bs]}>{b}</Strength>
                    <Bevel $tone="plain" $h={20} $fg="#f00">SELL</Bevel>
                    <Strength $bg={strengthBg[ss]}>{s}</Strength>
                  </Currency>
                ))}
              </Currencies>
              <Log />
              <Stats>
                <Stat $bg="#f00" $fg="#200" $ring>Regard</Stat>
                <Stat $bg="#f00" $fg="#200" $ring>^_^ Ding Dong ^_^</Stat>
                <Stat $fg="#0f0" $pl={9}>Lock= 0.00</Stat>
                <Stat $fg="#0f0" $pl={9}>Won =  0<Lost>Lost =  0</Lost></Stat>
                <Stat $bg="#008000" $fg="#001c00" $pl={9}>TP Adr% Pip = 0</Stat>
                <Stat $bg="#f00" $fg="#200" $pl={9}>SL Adr% Pip = 0</Stat>
              </Stats>
              <Strip $w={10} />
              <Stats>
                <Stat $fg="#0f0">47.28</Stat>
                <Stat $fg="#007800">Monitoring Trades</Stat>
                <Stat $fg="#f00" $pl={4}>Lowest= -6.52 (-1.30%)</Stat>
                <Stat $fg="#0f0" $pl={4}>Highest= 55.02 (11.00%)</Stat>
                <Stat $bg="#008000" $fg="#001c00" $pl={19}>Basket TP = 0</Stat>
                <Stat $bg="#f00" $fg="#200" $pl={19}>Basket SL = 0</Stat>
              </Stats>
              <Strip $w={2} />
            </Lower>
            <Marks width="1264" height="640" aria-hidden="true">
              <g fill="none" stroke="#fff" strokeWidth="4" strokeLinejoin="round" strokeLinecap="round">
                <path d="M649 250C645 239 656 235 668 235C681 233 689 236 696 241L722 249Q725 254 720 262Q716 271 699 267L668 261Q650 257 649 250" />
                <path d="M110 541Q106 553 109 577L111 601Q117 626 127 632Q136 637 144 631Q158 620 162 603L163 582L161 562Q160 538 152 530Q141 526 126 527Q114 531 112 540" />
                <path d="M315 538Q311 553 311 568L313 600Q318 618 330 627Q341 634 352 626Q362 610 362 586L359 553Q355 534 345 524Q335 520 322 522Q315 525 315 538" />
              </g>
              <path d="M685 238l22 3 12 11M666 260h60" fill="none" stroke="#ff0" />
            </Marks>
          </Panel>
          <ExpertName>
            Dash Fibo V11
            <svg width="12" height="12" viewBox="0 0 12 12" aria-hidden="true">
              <circle cx="6" cy="6" r="5.5" fill="none" stroke="#d8d8d8" />
              <path d="M4 3.500v2M8 3.500v2M3 7.500q3 3 6 0" fill="none" stroke="#d8d8d8" />
            </svg>
          </ExpertName>
        </Chart>
      </ChartFrame>

      <Terminal>
        <Side>
          <SideClose aria-label="Закрыть терминал">
            <svg width="7" height="7"><path d="M1 1l5 5M6 1L1 6" stroke="#000" strokeWidth="2" /></svg>
          </SideClose>
          <SideTitle>Терминал</SideTitle>
        </Side>
        <TerminalMain>
          <Orders>
            <colgroup>{orderCols.map((w, i) => <col key={i} width={w} />)}<col /></colgroup>
            <thead>
              <tr>
                <OTh $left>Ордер &nbsp;&nbsp; ⁄</OTh>
                {orderHeads.map((h, i) => <OTh key={i}>{h}</OTh>)}
              </tr>
            </thead>
            <tbody>
              {orders.map(([id, time, type, sym, open, sl, now, profit]) => (
                <OTr key={id}>
                  <OTd><OrderId><DocIcon buy={type === "buy"} />{id}</OrderId></OTd>
                  <OTd>2016.01.15 {time}</OTd>
                  <OTd>{type}</OTd>
                  <OTd>0.01</OTd>
                  <OTd>{sym}</OTd>
                  <OTd>{open}</OTd>
                  <OTd>{sl}</OTd>
                  <OTd>{sl}</OTd>
                  <OTd>{now}</OTd>
                  <OTd>0.00</OTd>
                  <OTd>0.00</OTd>
                  <OTd>
                    {profit}
                    <CloseMark aria-label="Закрыть ордер"><svg width="8" height="8"><path d="M1 1l6 6M7 1L1 7" stroke="#999" strokeWidth="2" /></svg></CloseMark>
                  </OTd>
                  <OTd>OFF</OTd>
                </OTr>
              ))}
            </tbody>
            <tfoot>
              <tr>
                <BalanceTd colSpan={11}>
                  <OrderId>
                    <svg width="14" height="14" aria-hidden="true"><rect x=".5" y=".5" width="11" height="13" fill="#fff" stroke="#666" /><path d="M6 11V5M3 7l3-3 3 3" stroke="#18a030" strokeWidth="2" fill="none" /></svg>
                    {"Баланс: 500.00 USD   Средства: 547.66   Маржа: 38.13   Свободная маржа: 509.53   Уровень: 1436.40%"}
                  </OrderId>
                </BalanceTd>
                <BalanceTd $sum>47.66</BalanceTd>
                <BalanceTd />
              </tr>
            </tfoot>
          </Orders>
          <Tabs>
            <Tab $active>Торговля</Tab>
            {tabs.map(([name, n], i) => (
              <React.Fragment key={name}>
                {i > 0 && <TabLine />}
                <Tab>{name}{n && <Count>{n}</Count>}</Tab>
              </React.Fragment>
            ))}
            <TabLine />
          </Tabs>
        </TerminalMain>
      </Terminal>

      <StatusBar>
        <StatusHint>Для справки, нажмите F1</StatusHint>
        <StatusItem $w={116}>SCALP INC</StatusItem>
        <StatusItem $w={103}>2015.11.11 00:58</StatusItem>
        <StatusItem $w={70}>O: 0.99880</StatusItem>
        <StatusItem $w={71}>H: 0.99880</StatusItem>
        <StatusItem $w={69}>L: 0.99866</StatusItem>
        <StatusItem $w={69}>C: 0.99872</StatusItem>
        <StatusItem $w={67}>V: 12</StatusItem>
        <StatusItem $w={148}>
          <svg width="24" height="13" aria-hidden="true">
            {[0, 3, 6, 9, 12, 15, 18, 21].map((x, i) => (
              <g key={x}><rect x={x} y="0" width="2" height={10 - i} fill="#6b8e23" /><rect x={x} y={11 - i} width="2" height={2 + i} fill="#1c4468" /></g>
            ))}
          </svg>
          11390/14 kb
        </StatusItem>
      </StatusBar>
      <TaskBar>
        <TaskStart>
          <svg width="190" height="8" aria-hidden="true">
            <circle cx="27" cy="14" r="13" fill="#5c94c8" stroke="#dbe8f4" />
            <path d="M60 2h2M63 2h2M66 2h2" stroke="#223" strokeWidth="2" />
            <rect x="95" y="2" width="20" height="8" fill="#c8e4f8" />
            <circle cx="167" cy="10" r="9" fill="#2c3440" />
          </svg>
        </TaskStart>
        {["#f0e080", "#d84030", "#1c7ce0", "#f0e010", "#e04020", "#e04020"].map((c, i) => (
          <TaskButton key={i} $active={i === 5} aria-label={"Окно " + (i + 1)}>
            <svg width="20" height="20" aria-hidden="true"><circle cx="10" cy="11" r="8" fill={c} /></svg>
          </TaskButton>
        ))}
        <Spacer />
      </TaskBar>
    </Shell>
  );
}
